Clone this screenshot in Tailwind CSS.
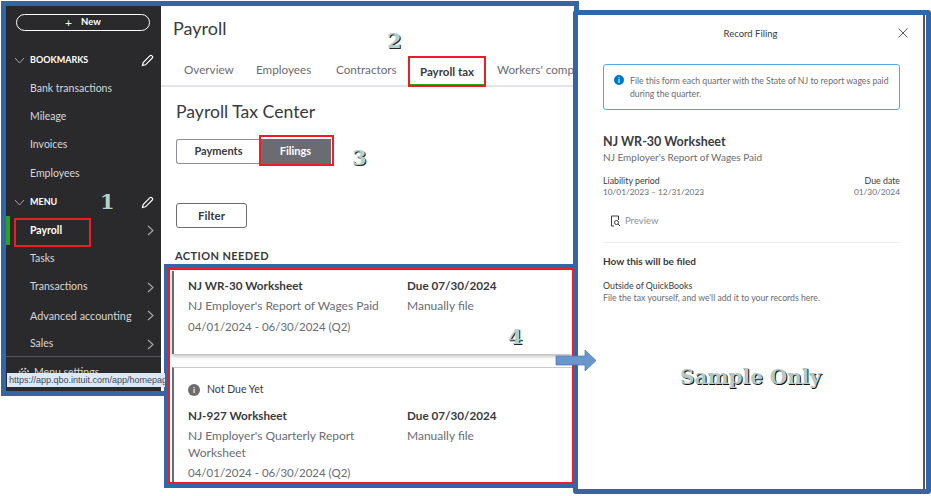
<!DOCTYPE html>
<html><head><meta charset="utf-8"><script src="https://cdn.jsdelivr.net/npm/@tailwindcss/browser@4"></script></head>
<body class="bg-white overflow-hidden">
<div class="relative w-[931px] h-[496px] overflow-hidden bg-white font-['Lato',sans-serif] text-[#393a3d]">

<!-- main window -->
<div class="absolute left-[1px] top-[1px] w-[578px] h-[395px] border-[5px] border-[#3465a6] flex bg-white overflow-hidden">
  <aside class="w-[155px] shrink-0 bg-[#2a2a2c] text-[#d6d7d9] flex flex-col text-[10.5px]">
    <div class="mx-[10px] mt-[8px] h-[17px] w-[134px] rounded-full border border-white flex items-center justify-center gap-[9px] text-white font-bold text-[9.5px] shrink-0"><span class="text-[12px] font-normal leading-none">+</span><span>New</span></div>
    <div class="mt-[15px] h-[28.4px] flex items-center pl-[8px] pr-[7px] shrink-0">
      <svg class="w-[11px] h-[7px] mr-[5px]" viewBox="0 0 11 7" fill="none" stroke="#a5a6a8" stroke-width="1"><path d="M1 1l4.500 5 4.500-5"/></svg>
      <span class="font-bold text-white text-[9px] flex-1">BOOKMARKS</span>
      <svg class="w-[13px] h-[13px]" viewBox="0 0 13 13" fill="none" stroke="#fff" stroke-width="1.200"><path d="M1.500 11.500l.7-3L9 1.700a1.200 1.200 0 0 1 1.800 0l.5.5a1.200 1.200 0 0 1 0 1.800L4.500 10.800z"/></svg>
    </div>
    <div class="h-[28.4px] flex items-center pl-[24px] shrink-0">Bank transactions</div>
    <div class="h-[28.4px] flex items-center pl-[24px] shrink-0">Mileage</div>
    <div class="h-[28.4px] flex items-center pl-[24px] shrink-0">Invoices</div>
    <div class="h-[28.4px] flex items-center pl-[24px] shrink-0">Employees</div>
    <div class="h-[28.4px] flex items-center pl-[8px] pr-[7px] shrink-0">
      <svg class="w-[11px] h-[7px] mr-[5px]" viewBox="0 0 11 7" fill="none" stroke="#a5a6a8" stroke-width="1"><path d="M1 1l4.500 5 4.500-5"/></svg>
      <span class="font-bold text-white text-[9px] flex-1">MENU</span>
      <svg class="w-[13px] h-[13px]" viewBox="0 0 13 13" fill="none" stroke="#fff" stroke-width="1.200"><path d="M1.500 11.500l.7-3L9 1.700a1.200 1.200 0 0 1 1.800 0l.5.5a1.200 1.200 0 0 1 0 1.800L4.500 10.800z"/></svg>
    </div>
    <div class="h-[28.4px] flex items-center pl-[24px] pr-[7px] justify-between border-l-4 border-[#2ca01c] shrink-0"><span class="-ml-[4px] font-bold text-white">Payroll</span><svg class="w-[7px] h-[11px]" viewBox="0 0 7 11" fill="none" stroke="#a5a6a8" stroke-width="1.200"><path d="M1 1l5 4.500-5 4.500"/></svg></div>
    <div class="h-[28.4px] flex items-center pl-[24px] shrink-0">Tasks</div>
    <div class="h-[28.4px] flex items-center pl-[24px] pr-[7px] justify-between shrink-0"><span>Transactions</span><svg class="w-[7px] h-[11px]" viewBox="0 0 7 11" fill="none" stroke="#a5a6a8" stroke-width="1.200"><path d="M1 1l5 4.500-5 4.500"/></svg></div>
    <div class="h-[28.4px] flex items-center pl-[24px] pr-[7px] justify-between shrink-0"><span class="text-[10.8px]">Advanced accounting</span><svg class="w-[7px] h-[11px]" viewBox="0 0 7 11" fill="none" stroke="#a5a6a8" stroke-width="1.200"><path d="M1 1l5 4.500-5 4.500"/></svg></div>
    <div class="h-[28.4px] flex items-center pl-[24px] pr-[7px] justify-between shrink-0"><span>Sales</span><svg class="w-[7px] h-[11px]" viewBox="0 0 7 11" fill="none" stroke="#a5a6a8" stroke-width="1.200"><path d="M1 1l5 4.500-5 4.500"/></svg></div>
    <div class="border-t border-[#55565a] mt-[-2px] pt-[8px] pl-[12px] flex items-center gap-[4px] shrink-0">
      <svg class="w-[12px] h-[12px]" viewBox="0 0 12 12" fill="none" stroke="#d6d7d9"><circle cx="6" cy="6" r="2"/><circle cx="6" cy="6" r="4.500" stroke-dasharray="2 1.500" stroke-width="1.500"/></svg><span>Menu settings</span>
    </div>
  </aside>
  <main class="flex-1 min-w-0 overflow-hidden">
    <h1 class="pl-[12px] pt-[10px] h-[42px] text-[18px] leading-[25px]">Payroll</h1>
    <nav class="h-[39px] border-b-2 border-[#e3e5e8] flex items-end pl-[23px] text-[11.7px] text-[#6b6c72] whitespace-nowrap">
      <span class="w-[72px] pb-[6px]">Overview</span><span class="w-[80px] pb-[6px]">Employees</span><span class="w-[72px] pb-[6px]">Contractors</span>
      <span class="w-[89px] pl-[12px] h-[31px] pt-[7px] -mb-[2px] font-bold text-[#393a3d] text-[11.500px]"><span>Payroll tax</span></span>
      <span class="pb-[6px]">Workers' comp</span>
    </nav>
    <h2 class="pl-[15px] mt-[12px] text-[17.6px] leading-[25px]">Payroll Tax Center</h2>
    <div class="ml-[15px] mt-[15px] flex h-[25px]">
      <div class="w-[84px] rounded-l-[3px] border border-[#8d9096] border-r-0 flex items-center justify-center text-[11px] font-bold">Payments</div>
      <div class="w-[71px] bg-[#6b6c72] text-white flex items-center justify-center text-[11px] font-bold">Filings</div>
    </div>
    <div class="ml-[15px] mt-[39px] w-[71px] h-[25px] rounded-[3px] border border-[#6b6c72] flex items-center justify-center text-[11.5px] font-bold">Filter</div>
    <div class="pl-[14px] mt-[20px] text-[11px] font-bold tracking-[.4px]">ACTION NEEDED</div>
  </main>
</div>

<!-- red highlights -->
<div class="absolute left-[14px] top-[218px] w-[77px] h-[29px] border-2 border-[#ee1c25]"></div>
<div class="absolute left-[408px] top-[56px] w-[78px] h-[31px] border-2 border-[#ee1c25]"><div class="absolute left-0 right-0 bottom-0 h-[1px] bg-[#2ca01c]"></div></div>
<div class="absolute left-[259px] top-[135px] w-[75px] h-[31px] border-2 border-[#ee1c25]"></div>

<!-- filings list -->
<div class="absolute left-[164px] top-[264px] w-[414px] h-[224px] border-[4px] border-[#3465a6] bg-white">
  <div class="h-full border-2 border-[#ee1c25] overflow-hidden pl-[2px] pt-[1px] flex flex-col text-[12px] text-[#6b6c72]">
    <div class="h-[83px] border-l-2 border-[#6b6c72] shadow-[0_2px_4px_rgba(0,0,0,.3)] pl-[14px] pt-[6px] grid grid-cols-[219px_1fr] content-start shrink-0">
      <div class="font-bold text-[#393a3d] h-[20px] text-[11.7px]">NJ WR-30 Worksheet</div><div class="font-bold text-[#393a3d] text-[11.7px]">Due 07/30/2024</div>
      <div class="h-[21px]">NJ Employer's Report of Wages Paid</div><div>Manually file</div>
      <div class="text-[11.500px]">04/01/2024 - 06/30/2024 (Q2)</div>
    </div>
    <div class="mt-[13px] flex-1 border-l-2 border-t border-l-[#6b6c72] border-t-[#c9cad6] pl-[14px] pt-[15px]">
      <div class="flex items-center gap-[7px] h-[14px] text-[10.500px] text-[#393a3d] mb-[10px]"><span class="w-[12px] h-[12px] rounded-full bg-[#6b6c72] text-white text-[8px] font-bold flex items-center justify-center">i</span>Not Due Yet</div>
      <div class="grid grid-cols-[219px_1fr] content-start">
        <div class="font-bold text-[#393a3d] h-[20px] text-[11.7px]">NJ-927 Worksheet</div><div class="font-bold text-[#393a3d] text-[11.7px]">Due 07/30/2024</div>
        <div class="leading-[17px] h-[37px]">NJ Employer's Quarterly Report<br>Worksheet</div><div>Manually file</div>
        <div class="text-[11.500px]">04/01/2024 - 06/30/2024 (Q2)</div>
      </div>
    </div>
  </div>
</div>

<!-- tooltip -->
<div class="absolute left-[7px] top-[373px] w-[158px] h-[14px] bg-[#dde8f6] text-[#3f4a58] text-[9px] leading-[14px] pl-[2px] whitespace-nowrap overflow-hidden font-['Liberation_Sans',sans-serif]">https://app.qbo.intuit.com/app/homepage</div>

<!-- record filing -->
<div class="absolute left-[573px] top-[10px] w-[358px] h-[484px] border-[5px] border-[#3465a6] rounded-[3px] bg-white text-[#393a3d]">
  <div class="h-full border-r-2 border-[#55565a] pt-[11px] pl-[25px] pr-[23px] w-[347px] flex flex-col">
    <div class="relative text-center text-[9.500px] h-[15px] leading-[15px] -translate-x-[1px]">Record Filing
      <svg class="absolute right-[-9px] top-[2px] w-[10px] h-[10px]" viewBox="0 0 10 10" stroke="#55565a" fill="none"><path d="M.5.500l9 9M9.500.500l-9 9"/></svg>
    </div>
    <div class="mt-[23px] h-[46px] w-[297px] rounded-[3px] border border-[#5aa7dd] pl-[10px] pr-[10px] pt-[9px] flex gap-[6px] text-[8.7px] leading-[13px] text-[#6b6c72] shrink-0">
      <span class="w-[10px] h-[10px] mt-[1px] shrink-0 rounded-full bg-[#0077c5] text-white text-[7px] font-bold flex items-center justify-center">i</span>
      <span>File this form each quarter with the State of NJ to report wages paid during the quarter.</span>
    </div>
    <div class="mt-[24px] text-[12.5px] font-bold leading-[16px]">NJ WR-30 Worksheet</div>
    <div class="text-[10px] text-[#6b6c72] leading-[15px]">NJ Employer's Report of Wages Paid</div>
    <div class="mt-[10px] flex justify-between text-[8.5px] leading-[11.500px] w-[297px]">
      <div><div class="text-[8.8px]">Liability period</div><div class="text-[#6b6c72] text-[8.3px]">10/01/2023 – 12/31/2023</div></div>
      <div class="text-right"><div class="text-[8.8px]">Due date</div><div class="text-[#6b6c72] text-[8.3px]">01/30/2024</div></div>
    </div>
    <div class="mt-[16px] pl-[7px] flex items-center gap-[4px] text-[9.500px] text-[#8d9096] h-[14px]">
      <svg class="w-[11px] h-[12px]" viewBox="0 0 11 12" fill="none" stroke="#393a3d"><path d="M4 11H1.500V1h7v4"/><circle cx="6.500" cy="7.500" r="2"/><path d="M8 9l2 2"/></svg>Preview
    </div>
    <div class="mt-[14px] border-t border-[#eceef1] w-[297px]"></div>
    <div class="mt-[12px] text-[10px] font-bold leading-[13px]">How this will be filed</div>
    <div class="mt-[12px] text-[8.8px] leading-[12px]">Outside of QuickBooks</div>
    <div class="text-[8.7px] leading-[12px] text-[#6b6c72]">File the tax yourself, and we'll add it to your records here.</div>
  </div>
</div>

<!-- arrow -->
<svg class="absolute left-[555px] top-[349px] w-[42px] h-[23px]" viewBox="0 0 42 23"><path d="M1 7h29V1l11 10.500L30 22v-6H1z" fill="#6a96cc" stroke="#4a76ae" stroke-width=".7"/></svg>

<!-- annotations -->
<div class="absolute left-[100px] top-[186px] font-['DejaVu_Serif',serif] font-bold text-[21px] text-[#b4d0cc] [text-shadow:1px_1px_0_#222]">1</div>
<div class="absolute left-[387px] top-[25px] font-['DejaVu_Serif',serif] font-bold text-[21px] text-[#b4d0cc] [text-shadow:1px_1px_0_#222]">2</div>
<div class="absolute left-[352px] top-[142px] font-['DejaVu_Serif',serif] font-bold text-[21px] text-[#b4d0cc] [text-shadow:1px_1px_0_#222]">3</div>
<div class="absolute left-[508px] top-[321px] font-['DejaVu_Serif',serif] font-bold text-[21px] text-[#b4d0cc] [text-shadow:1px_1px_0_#222]">4</div>
<div class="absolute left-[680px] top-[362px] font-['DejaVu_Serif',serif] font-bold text-[20px] text-[#b4c8c4] whitespace-nowrap [text-shadow:1px_1px_0_#111]">Sample Only</div>
</div>
</body></html>
